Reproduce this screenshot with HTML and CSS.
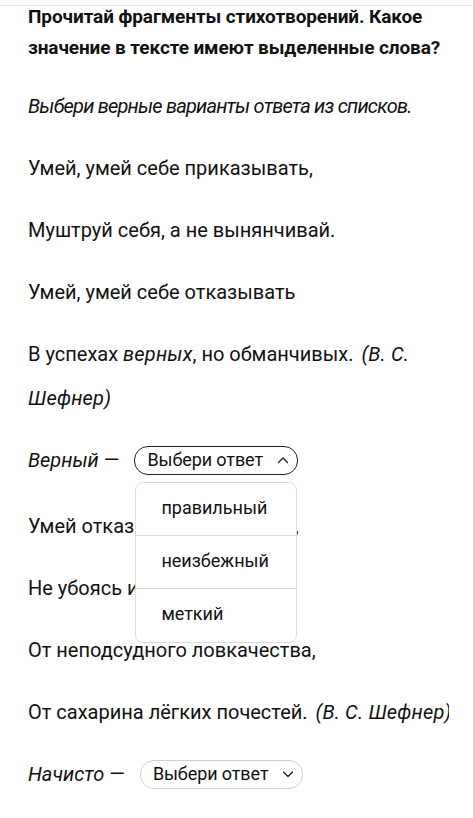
FILE: index.html
```html
<!DOCTYPE html>
<html lang="ru">
  <head>
    <meta charset="UTF-8" />
    <meta name="viewport" content="width=device-width, initial-scale=1.0" />
    <title>Выделенные слова</title>
    <link rel="stylesheet" href="styles.css">
  </head>
  <body>
    <div class="top-rule"></div>
    <div class="content">
      <h1>Прочитай фрагменты стихотворений. Какое значение в тексте имеют выделенные слова?</h1>
      <p class="hint">Выбери верные варианты ответа из списков.</p>

      <p>Умей, умей себе приказывать,</p>
      <p>Муштруй себя, а не вынянчивай.</p>
      <p>Умей, умей себе отказывать</p>
      <p>В успехах <em>верных</em>, но обманчивых. <em class="author">(В. С. Шефнер)</em></p>

      <div class="answer-row">
        <em>Верный</em>&nbsp;—
        <div class="picker">
          <button type="button" class="picker-btn is-open">
            Выбери ответ
            <svg class="chevron" width="12" height="8" viewBox="0 0 12 8"><path d="M1.5 6.5 6 2l4.5 4.5" fill="none" stroke="#222" stroke-width="1.4" stroke-linecap="round" stroke-linejoin="round"/></svg>
          </button>
          <ul class="picker-list">
            <li>правильный</li>
            <li>неизбежный</li>
            <li>меткий</li>
          </ul>
        </div>
      </div>

      <p>Умей отказываться начисто,</p>
      <p>Не убоясь и одиночества,</p>
      <p>От неподсудного ловкачества,</p>
      <p class="nowrap">От сахарина лёгких почестей. <em class="author">(В. С. Шефнер)</em></p>

      <div class="answer-row">
        <em>Начисто</em>&nbsp;—
        <div class="picker">
          <button type="button" class="picker-btn">
            Выбери ответ
            <svg class="chevron" width="12" height="8" viewBox="0 0 12 8"><path d="M1.5 2 6 6.5 10.5 2" fill="none" stroke="#222" stroke-width="1.4" stroke-linecap="round" stroke-linejoin="round"/></svg>
          </button>
        </div>
      </div>
    </div>
    <div class="bottom-bar">
      <span class="side"></span>
      <span class="middle"></span>
      <span class="side"></span>
    </div>
  </body>
</html>
```

FILE: styles.css
```css
* {
  margin: 0;
  padding: 0;
  box-sizing: border-box;
}

body {
  font-family: Roboto, "Noto Sans", sans-serif;
  color: #111;
  background: #fff;
}

.top-rule {
  height: 6px;
  border-bottom: 1px solid #e6e6e6;
}

.content {
  margin: 0 24px 0 28px;
  position: relative;
}

h1 {
  margin-top: -5px;
  font-size: 19px;
  line-height: 31px;
  font-weight: 700;
  letter-spacing: -0.1px;
}

p,
.answer-row {
  font-size: 20px;
  line-height: 44px;
  margin-bottom: 18px;
}

p em {
  letter-spacing: 0.2px;
}

p .author {
  margin-left: 3px;
}

.hint {
  margin-top: 21px;
  font-style: italic;
  letter-spacing: -0.8px;
}

.nowrap {
  white-space: nowrap;
  overflow: hidden;
}

.answer-row {
  display: flex;
  align-items: center;
  height: 44px;
  margin-bottom: 22px;
}

.picker {
  position: relative;
  margin-left: 15px;
}

.picker-btn {
  display: flex;
  align-items: center;
  gap: 14px;
  height: 29px;
  padding: 0 8px 0 12px;
  font: inherit;
  font-size: 18px;
  letter-spacing: -0.1px;
  color: #111;
  background: #fff;
  border: 1px solid #cfcfcf;
  border-radius: 14px;
}

.picker-btn.is-open {
  border-color: #222;
}

.picker-list {
  position: absolute;
  top: 36px;
  left: 1px;
  width: 162px;
  list-style: none;
  background: #fff;
  border: 1px solid #dcdcdc;
  border-radius: 8px;
  z-index: 2;
}

.picker-list li {
  height: 53px;
  line-height: 50px;
  padding-left: 25px;
  font-size: 18px;
  border-bottom: 1px solid #dcdcdc;
}

.picker-list li:last-child {
  border-bottom: none;
}

.bottom-bar {
  display: flex;
  height: 12px;
  margin-top: 10px;
}

.bottom-bar .side {
  width: 24px;
  background: #f3f3f3;
}

.bottom-bar .middle {
  flex: 1;
}
```
